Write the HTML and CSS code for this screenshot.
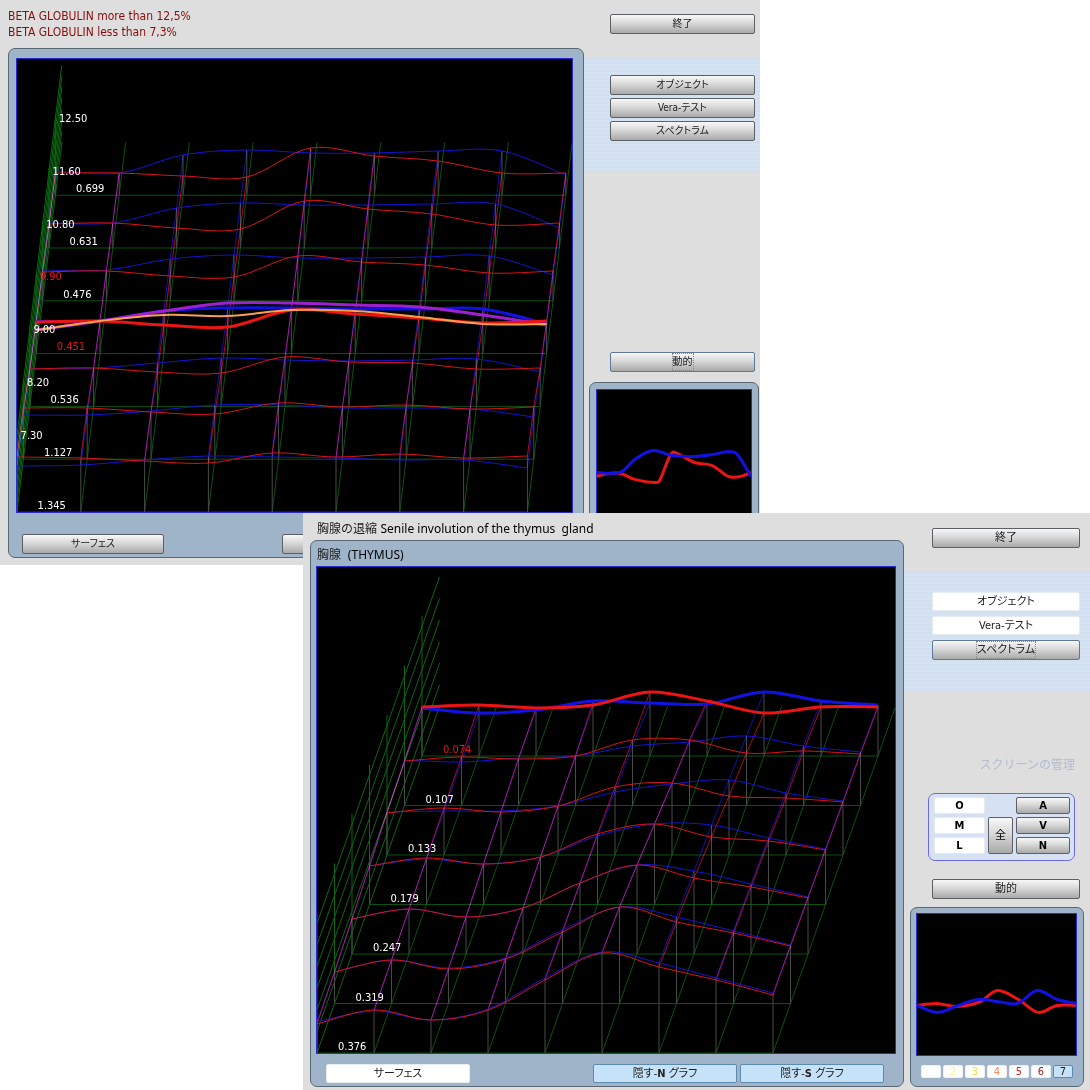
FILE: index.html
```html
<!DOCTYPE html>
<html lang="ja">
    <head>
        <meta charset="utf-8">
        <title>BETA GLOBULIN / THYMUS</title>
        <link rel="stylesheet" href="styles.css">
    </head>
    <body>
    <div class="desktop">
        <section class="window window-back">
            <div class="main">
                <p class="warning">BETA GLOBULIN more than 12,5%<br>BETA GLOBULIN less than 7,3%</p>
                <div class="panel">
                    <div class="screen"><svg id="chart1" viewBox="17 59 555 453"></svg></div>
                    <div class="tools">
                        <button type="button" class="btn">サーフェス</button>
                        <button type="button" class="btn"></button>
                    </div>
                </div>
            </div>
            <aside class="side">
                <button type="button" class="btn">終了</button>
                <div class="band">
                    <button type="button" class="btn">オブジェクト</button>
                    <button type="button" class="btn">Vera-テスト</button>
                    <button type="button" class="btn">スペクトラム</button>
                </div>
                <button type="button" class="btn dynamic focus"><span>動的</span></button>
                <div class="panel mini">
                    <div class="screen"><svg id="mini1" viewBox="596 390 155 150"></svg></div>
                </div>
            </aside>
        </section>

        <section class="window window-front">
            <div class="main">
                <h1 class="title">胸腺の退縮 <span class="latin">Senile involution of the thymus  gland</span></h1>
                <div class="panel">
                    <h2 class="organ">胸腺  <span class="latin">(THYMUS)</span></h2>
                    <div class="screen"><svg id="chart2" viewBox="317 567 578 486"></svg></div>
                    <div class="tools">
                        <button type="button" class="btn white">サーフェス</button>
                        <button type="button" class="btn blue push">隠す-<b>N</b> グラフ</button>
                        <button type="button" class="btn blue">隠す-<b>S</b> グラフ</button>
                    </div>
                </div>
            </div>
            <aside class="side">
                <button type="button" class="btn">終了</button>
                <div class="band">
                    <button type="button" class="btn white">オブジェクト</button>
                    <button type="button" class="btn white">Vera-テスト</button>
                    <button type="button" class="btn focus"><span>スペクトラム</span></button>
                </div>
                <p class="caption">スクリーンの管理</p>
                <div class="keys">
                    <button type="button" class="btn white">O</button>
                    <button type="button" class="btn key-a">A</button>
                    <button type="button" class="btn white">M</button>
                    <button type="button" class="btn key-all">全</button>
                    <button type="button" class="btn key-v">V</button>
                    <button type="button" class="btn white">L</button>
                    <button type="button" class="btn key-n">N</button>
                </div>
                <button type="button" class="btn dynamic">動的</button>
                <div class="panel mini">
                    <div class="screen"><svg id="mini2" viewBox="916 914 160 142"></svg></div>
                    <div class="levels">
                        <button type="button" class="level"></button>
                        <button type="button" class="level l2">2</button>
                        <button type="button" class="level l3">3</button>
                        <button type="button" class="level l4">4</button>
                        <button type="button" class="level l5">5</button>
                        <button type="button" class="level l6">6</button>
                        <button type="button" class="level l7">7</button>
                    </div>
                </div>
            </aside>
        </section>
    </div>
    <script src="charts.js"></script>
    </body>
</html>
```

FILE: styles.css
```css
body{
    margin:0;
    background:#fff;
    font-family:"DejaVu Sans Condensed","Noto Sans CJK JP",sans-serif;
    font-size:11px;
    color:#1c1c1c;
}
p,h1,h2{
    margin:0;
    font-weight:normal;
}
.desktop{
    position:relative;
    min-height:1090px;
    overflow:hidden;
}
.window{
    position:absolute;
    display:flex;
    background:#dedede;
}
.window-back{
    left:0;
    top:0;
    right:330px;
    padding-bottom:7px;
}
.window-front{
    left:303px;
    top:513px;
    right:0;
    padding-bottom:4px;
}
.main{
    flex:1;
    min-width:0;
    padding-left:8px;
}
.side{
    flex:none;
    display:flex;
    flex-direction:column;
    width:176px;
    padding-top:14px;
    box-sizing:border-box;
}
.window-front .side{
    width:186px;
    padding-top:15px;
}

/* text */
.warning{
    padding:8px 0;
    font-size:12px;
    line-height:16px;
    color:#8a0a0a;
}
.title,.organ{
    font-size:12px;
    white-space:pre;
}
.latin{
    font-family:"Noto Sans",sans-serif;
    font-size:12px;
    color:#000;
}
.title{
    padding-left:7px;
    line-height:32px;
    height:27px;
}
.organ{
    padding-left:1px;
    line-height:28px;
    height:25px;
}
.caption{
    margin:64px 15px 18px 0;
    font-size:12px;
    line-height:20px;
    text-align:right;
    color:#b2bccb;
}

/* panels */
.panel{
    padding:9px 10px 3px 7px;
    border:1px solid #5a6874;
    border-radius:7px;
    background:#9fb4c9;
}
.window-front .panel{
    padding:0 7px 3px 5px;
}
.window-front .main{
    padding-left:7px;
}
.screen{
    border:1px solid #2a2ad0;
    background:#000;
}
.screen svg{
    display:block;
    width:100%;
}
.tools{
    display:flex;
    gap:118px;
    padding:21px 6px 0;
}
.tools .btn{
    width:142px;
}
.window-front .tools{
    gap:3px;
    padding:10px 12px 0 10px;
}
.window-front .tools .btn{
    width:144px;
    height:19px;
}
.push{
    margin-left:auto;
}
.mini,.window-front .mini{
    margin:10px 1px 0 5px;
    padding:6px;
}
.window-front .mini{
    margin:8px 6px 0;
    padding:5px 6px 8px 5px;
}

/* buttons */
.btn{
    box-sizing:border-box;
    height:20px;
    padding:0;
    border:1px solid #5c5f63;
    border-radius:2px;
    background:linear-gradient(#f8f8f8,#d8d8d8 45%,#a9a9a9);
    font-family:inherit;
    font-size:10px;
    line-height:16px;
    font-feature-settings:"palt";
    color:#222;
}
.window-front .btn{
    font-size:11px;
}
.window-front .white{
    border-color:#e8ebee;
    background:#fff;
}
.window-front .blue{
    border-color:#5d8bb0;
    background:#c5e2f8;
}
.focus{
    border-color:#60799a;
}
.focus span{
    display:inline-block;
    outline:1px dotted #888;
}
.side>.btn{
    margin:0 5px 0 26px;
}
.side>.dynamic{
    margin-top:180px;
}
.window-front .side>.btn{
    margin:0 10px 0 28px;
}
.window-front .side>.dynamic{
    margin-top:18px;
}
.band{
    display:flex;
    flex-direction:column;
    gap:3px;
    height:97px;
    margin-top:24px;
    padding:17px 5px 0 26px;
    background:repeating-linear-gradient(#d1e0f0 0,#d1e0f0 2px,#d4e2f1 2px,#d4e2f1 4px);
}
.window-front .band{
    gap:5px;
    height:99px;
    padding:20px 10px 0 28px;
}
.band .white{
    height:19px;
}
.keys{
    display:grid;
    grid-template-columns:1fr 25px 54px;
    grid-template-rows:17px 17px 17px;
    gap:3px 3px;
    margin:0 15px 0 24px;
    padding:3px 4px 6px 5px;
    border:1px solid #6b6be0;
    border-radius:7px;
    background:#d6e2f3;
}
.keys .btn{
    height:17px;
    line-height:14px;
    font-weight:bold;
    color:#000;
}
.keys .key-all{
    grid-row:2 / 4;
    grid-column:2;
    height:auto;
    font-weight:normal;
}
.keys .white{
    grid-column:1;
}
.key-a,.key-v,.key-n{
    grid-column:3;
}
.levels{
    display:flex;
    gap:2px;
    padding:9px 4px 0 5px;
}
.level{
    flex:1;
    height:13px;
    padding:0;
    border:1px solid #eef1f4;
    border-radius:2px;
    background:#fff;
    font-family:inherit;
    font-size:11px;
    line-height:11px;
}
.l2{color:#f6efa6;}
.l3{color:#ece23c;}
.l4{color:#f0845a;}
.l5{color:#e01c1c;}
.l6{color:#962020;}
.l7{
    border-color:#5d8bb0;
    background:#c5e2f8;
    color:#222;
}

/* charts */
svg path,svg line{
    fill:none;
    stroke-width:1;
}
svg text{
    font-size:11px;
    fill:#fff;
}
svg .hot{fill:#e01818;}
svg .floor{stroke:#0b520e;}
svg .wall{stroke:#0c6612;}
svg .post{stroke:#484c48;}
svg .red{stroke:#d81418;}
svg .blue-line{stroke:#1414d4;}
svg .link-red{stroke:#a80a2c;mix-blend-mode:screen;}
svg .link-blue{stroke:#1212a0;mix-blend-mode:screen;}
svg .thick{stroke-width:3;}
svg .red.thick{stroke:#ee1414;}
svg .blue-line.thick{stroke:#1212e6;}
svg .violet{stroke:#a020d0;}
svg .orange.thick{stroke:#f8a050;stroke-width:2;}
```

FILE: charts.js
```js
var NS="http://www.w3.org/2000/svg";

function add(svg,name,attrs,text){
    var el=document.createElementNS(NS,name);
    for(var key in attrs){
        el.setAttribute(key,attrs[key]);
    }
    if(text){
        el.textContent=text;
    }
    svg.appendChild(el);
}
function line(svg,cls,x1,y1,x2,y2){
    add(svg,"line",{"class":cls,x1:x1,y1:y1,x2:x2,y2:y2});
}
//smooth curve through all points
function curve(svg,cls,pts){
    var d="M"+pts[0];
    for(var i=0; i<pts.length-1; i++){
        var p0=pts[i-1]||pts[i], p1=pts[i], p2=pts[i+1], p3=pts[i+2]||p2;
        d+="C"+[p1[0]+(p2[0]-p0[0])/6, p1[1]+(p2[1]-p0[1])/6,
                p2[0]-(p3[0]-p1[0])/6, p2[1]-(p3[1]-p1[1])/6, p2[0], p2[1]];
    }
    add(svg,"path",{"class":cls,d:d});
}

//rows run from the front (0) to the back (6)
function surface(id,o){
    var svg=document.getElementById(id);
    var i,j,k;
    function x(i,j){ return o.x+o.dx*i+o.sx*j; }
    function y(j){ return o.y-o.sy*j; }
    function points(row,j){
        return row.map(function(v,i){ return [x(i,j),v]; });
    }
    for(k=0; k<=o.levels; k++){
        line(svg,"wall",x(0,0),y(0)-k*o.step,x(0,7),y(7)-k*o.step);
    }
    for(j=0; j<7; j++){
        line(svg,"wall",x(0,j),y(j),x(0,j),y(j)-o.wall);
        line(svg,"floor",x(0,j),y(j),x(8,j),y(j));
    }
    for(i=1; i<=8; i++){
        line(svg,"floor",x(i,0),y(0),x(i,7),y(7));
    }
    for(j=0; j<7; j++){
        for(i=0; i<=8; i++){
            line(svg,"post",x(i,j),y(j),x(i,j),Math.min(o.red[j][i],o.blue[j][i]));
        }
    }
    for(i=0; i<=8; i++){
        for(j=0; j<6; j++){
            line(svg,"link-blue",x(i,j),o.blue[j][i],x(i,j+1),o.blue[j+1][i]);
            line(svg,"link-red",x(i,j),o.red[j][i],x(i,j+1),o.red[j+1][i]);
        }
    }
    for(j=6; j>=0; j--){
        var thick=j==o.active?" thick":"";
        curve(svg,"blue-line"+thick,points(o.blue[j],j));
        if(thick&&o.violet){
            curve(svg,"violet thick",points(o.violet,j));
        }
        curve(svg,"red"+thick,points(o.red[j],j));
        if(thick&&o.orange){
            curve(svg,"orange thick",points(o.orange,j));
        }
    }
    o.labels.forEach(function(set){
        set.text.forEach(function(t,n){
            add(svg,"text",{"class":n==set.hot?"hot":"",x:set.x-o.sx*n,y:set.y+o.sy*n},t);
        });
    });
}

surface("chart1",{
    x:17, y:512, dx:63.8, sx:6.4, sy:52.8, levels:7, step:11, wall:80, active:3,
    red:[
        [457,458,461,463,453,457,454,458,456],
        [408,408,412,414,403,407,405,409,407],
        [369,368,372,373,357,362,363,369,368],
        [322,321,325,327,310,314,318,323,321],
        [272,271,276,277,256,262,265,273,271],
        [224,223,228,229,201,209,214,225,223],
        [173,173,176,177,148,156,161,173,173]
    ],
    blue:[
        [466,465,460,456,457,458,460,460,468],
        [415,415,411,405,405,408,408,409,417],
        [369,368,363,358,360,361,360,359,372],
        [321,321,311,308,308,309,309,309,324],
        [270,270,259,255,258,258,257,256,275],
        [223,223,208,203,205,205,204,204,228],
        [171,173,155,150,153,153,151,151,175]
    ],
    violet:[330,321,311,303,303,305,307,315,325],
    orange:[330,321,315,316,310,311,317,324,324],
    labels:[
        {x:59, y:122, hot:3, text:["12.50","11.60","10.80","9.90","9.00","8.20","7.30"]},
        {x:76, y:192, hot:3, text:["0.699","0.631","0.476","0.451","0.536","1.127","1.345"]}
    ]
});

surface("chart2",{
    x:317, y:1053, dx:57, sx:17.5, sy:49.5, levels:6, step:21.6, wall:140, active:6,
    red:[
        [1024,1010,1020,1010,980,953,967,980,995],
        [972,960,969,959,932,907,922,933,946],
        [919,909,917,908,883,865,878,887,898],
        [866,858,864,857,834,824,837,841,850],
        [813,808,812,806,787,783,796,798,802],
        [761,757,759,756,740,740,753,751,754],
        [707,705,708,705,692,701,713,707,707]
    ],
    blue:[
        [1022,1011,1020,1009,978,952,963,978,993],
        [972,960,968,958,930,907,917,931,945],
        [919,909,917,908,883,865,871,884,897],
        [866,859,864,857,836,824,825,838,849],
        [812,811,811,806,792,784,780,793,801],
        [760,762,758,756,746,742,736,746,752],
        [708,713,710,701,703,704,692,701,705]
    ],
    labels:[
        {x:443, y:753, hot:0, text:["0.074","0.107","0.133","0.179","0.247","0.319","0.376"]}
    ]
});

var mini1=document.getElementById("mini1");
curve(mini1,"red thick",[[595,477],[607,474],[620,474],[634,480],[655,483],[660,479],[670,455],[677,454],[694,463],[712,466],[728,477],[740,477],[751,473]]);
curve(mini1,"blue-line thick",[[595,473],[619,473],[634,460],[652,451],[672,456],[694,457],[712,455],[729,452],[738,456],[751,477]]);

var mini2=document.getElementById("mini2");
curve(mini2,"red thick",[[916,1006],[936,1004],[955,1007],[978,1003],[997,991],[1018,1000],[1038,1013],[1057,1006],[1077,1006]]);
curve(mini2,"blue-line thick",[[916,1006],[936,1013],[955,1007],[977,1000],[997,1002],[1017,1004],[1037,991],[1057,1000],[1077,1004]]);
```
